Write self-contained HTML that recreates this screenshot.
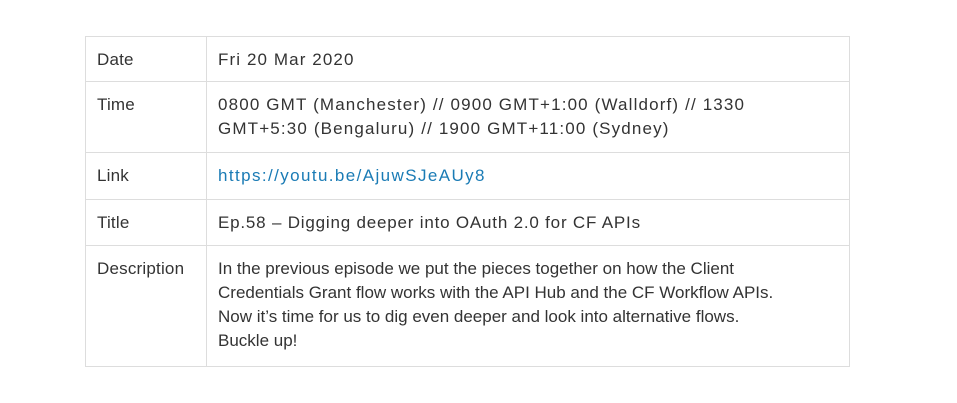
<!DOCTYPE html>
<html><head><style>
body{margin:0;background:#fff;width:957px;height:403px;font-family:"Liberation Sans",sans-serif;color:#333;font-size:17px;}
table{position:absolute;left:85px;top:36px;width:765px;border-collapse:collapse;}
td{border:1px solid #ddd;vertical-align:top;padding:11px 11px 0 11px;line-height:24px;white-space:nowrap;box-sizing:border-box;}
td:first-child{width:121px;letter-spacing:0.2px;}
a{color:#1a7bb5;text-decoration:none;}
</style></head><body>
<table>
<tr style="height:45px"><td>Date</td><td style="letter-spacing:1.1px">Fri 20 Mar 2020</td></tr>
<tr style="height:71px"><td>Time</td><td style="letter-spacing:1.15px">0800 GMT (Manchester) // 0900 GMT+1:00 (Walldorf) // 1330<br>GMT+5:30 (Bengaluru) // 1900 GMT+11:00 (Sydney)</td></tr>
<tr style="height:47px"><td>Link</td><td style="letter-spacing:1.4px"><a>https://youtu.be/AjuwSJeAUy8</a></td></tr>
<tr style="height:46px"><td>Title</td><td style="letter-spacing:0.8px">Ep.58 – Digging deeper into OAuth 2.0 for CF APIs</td></tr>
<tr style="height:121px"><td>Description</td><td>In the previous episode we put the pieces together on how the Client<br>Credentials Grant flow works with the API Hub and the CF Workflow APIs.<br>Now it’s time for us to dig even deeper and look into alternative flows.<br>Buckle up!</td></tr>
</table>
</body></html>
